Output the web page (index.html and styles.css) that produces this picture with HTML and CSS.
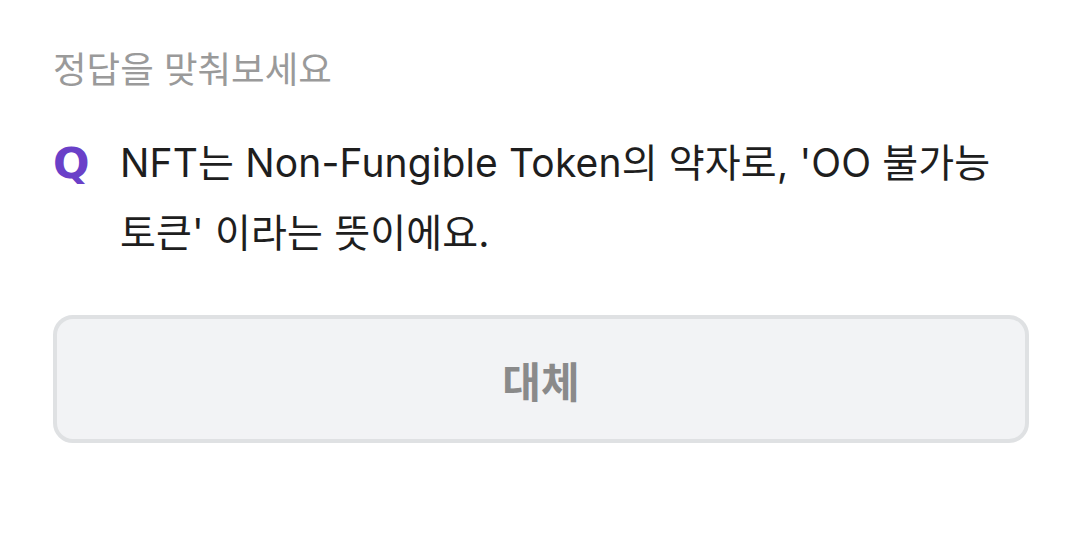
FILE: index.html
```html
<!DOCTYPE html>
<html lang="ko">
<head>
<meta charset="utf-8">
<link rel="stylesheet" href="styles.css">
</head>
<body>
<div class="page">
  <div class="title">정답을 맞춰보세요</div>
  <div class="question">
    <span class="qmark">Q</span>
    <p class="qtext">NFT는 Non-Fungible Token의 약자로, 'OO 불가능 토큰' 이라는 뜻이에요.</p>
  </div>
  <div class="answer">대체</div>
</div>
</body>
</html>
```
FILE: styles.css
```css
html, body { margin: 0; padding: 0; background: #fff; }
body { font-family: Inter, "Noto Sans CJK KR", sans-serif; }
.page { padding: 44px 51px 0 53px; }
.title { font-size: 36.5px; line-height: 48px; color: #9a9a9a; font-family: "Noto Sans CJK KR", sans-serif; }
.question { display: flex; margin-top: 36px; }
.qmark { font-size: 43px; font-weight: 700; color: #6a40c8; line-height: 70px; width: 67px; flex: none; font-family: "DejaVu Sans", sans-serif; }
.qtext { margin: 0; font-size: 39px; letter-spacing: 0.15px; line-height: 70px; color: #1e1e1e; word-break: keep-all; font-family: Inter, "Noto Sans CJK KR", sans-serif; }
.answer {
  margin-top: 47px;
  height: 120px;
  border: 4px solid #dfe1e3;
  border-radius: 20px;
  background: #f2f3f5;
  display: flex; align-items: center; justify-content: center;
  font-size: 42px; font-weight: 700; color: #8a8a8a;
  font-family: "Noto Sans CJK KR", sans-serif;
}
```
